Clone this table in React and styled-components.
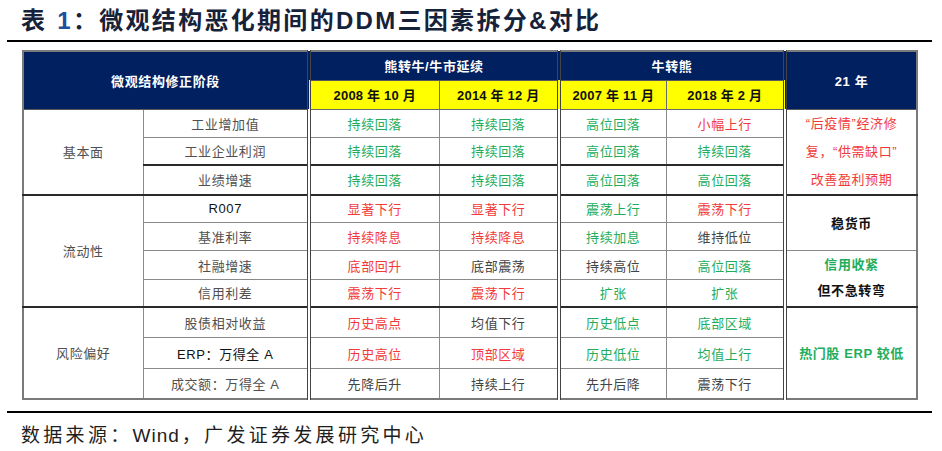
import React from "react";
import styled, { createGlobalStyle } from "styled-components";

const Global = createGlobalStyle`
  html, body { margin: 0; padding: 0; background: #fff; }
  body { font-family: "Liberation Sans", "Noto Sans CJK SC", sans-serif; }
`;

const Page = styled.div`
  width: 942px;
  height: 451px;
  padding: 0 10px 0 7px;
  box-sizing: border-box;
  display: flex;
  flex-direction: column;
`;

const Title = styled.h1`
  margin: 0;
  height: 40px;
  line-height: 42px;
  padding-left: 14px;
  font-family: "Liberation Sans", "Noto Sans CJK SC", sans-serif;
  font-size: 24px;
  font-weight: 700;
  letter-spacing: 2.3px;
  color: #16223a;
  white-space: nowrap;
`;

const Num = styled.span`
  color: #1d4f9c;
  margin-left: 10px;
`;

const Rule = styled.div`
  height: 2px;
  background: #000;
  width: 925px;
  margin-top: ${(p) => p.$mt || 0}px;
`;

const TableWrap = styled.div`
  padding: 8px 0 0 15px;
`;

const Table = styled.table`
  border-collapse: collapse;
  table-layout: fixed;
  width: 894px;
  border: 2px solid #7a7a7a;
  font-size: 13px;
  letter-spacing: 0.6px;
`;

const Col = styled.col`
  width: ${(p) => p.$w}px;
`;

const Row = styled.tr`
  height: ${(p) => p.$h}px;
`;

const HeadCell = styled.th`
  background: #002060;
  color: #fff;
  font-weight: 700;
  font-size: 13px;
  text-align: center;
  padding: 0;
  border: 1px solid #5a5a5a;
  border-left: ${(p) => (p.$group ? "4px double #444" : "1px solid #5a5a5a")};
`;

const DateCell = styled.th`
  background: #ffff00;
  color: #111;
  font-weight: 700;
  font-size: 13px;
  letter-spacing: 0.2px;
  text-align: center;
  padding: 0;
  border: 1px solid #6a6a6a;
  border-left: ${(p) => (p.$group ? "4px double #444" : "1px solid #6a6a6a")};
`;

const tones = {
  red: "#f23a3a",
  green: "#22ad5c",
  gray: "#444",
  label: "#505050",
  black: "#111",
};

const Cell = styled.td`
  text-align: center;
  padding: 0;
  color: ${(p) => tones[p.$tone || "gray"]};
  font-weight: ${(p) => (p.$bold ? 700 : 400)};
  border: 1px solid #8a8a8a;
  border-top: ${(p) => (p.$sep ? "2px solid #2a2a2a" : "1px solid #8a8a8a")};
  border-left: ${(p) => (p.$group ? "4px double #444" : "1px solid #8a8a8a")};
  line-height: ${(p) => (p.$lh ? p.$lh + "px" : "normal")};
`;

const Line = styled.div`
  color: ${(p) => tones[p.$tone]};
`;

const Footer = styled.div`
  padding: 7px 0 0 14px;
  font-family: "Liberation Sans", "Noto Sans CJK SC", sans-serif;
  font-size: 19px;
  letter-spacing: 3.3px;
  color: #1e1e1e;
  white-space: nowrap;
`;

const Latin = styled.span`
  letter-spacing: 1px;
  margin-right: 2px;
`;

const heads = ["2008 年 10 月", "2014 年 12 月", "2007 年 11 月", "2018 年 2 月"];
const widths = [120, 166, 130, 120, 107, 119, 132];

const sections = [
  {
    name: "基本面",
    rows: [
      { label: "工业增加值", h: 28, v: [["green", "持续回落"], ["green", "持续回落"], ["green", "高位回落"], ["red", "小幅上行"]] },
      { label: "工业企业利润", h: 28, v: [["green", "持续回落"], ["green", "持续回落"], ["green", "高位回落"], ["green", "持续回落"]] },
      { label: "业绩增速", h: 29, darkTop: true, v: [["green", "持续回落"], ["green", "持续回落"], ["green", "高位回落"], ["green", "高位回落"]] },
    ],
  },
  {
    name: "流动性",
    rows: [
      { label: "R007", labelTone: "black", h: 28, v: [["red", "显著下行"], ["red", "显著下行"], ["green", "震荡上行"], ["red", "震荡下行"]] },
      { label: "基准利率", h: 28, v: [["red", "持续降息"], ["red", "持续降息"], ["green", "持续加息"], ["gray", "维持低位"]] },
      { label: "社融增速", h: 29, v: [["red", "底部回升"], ["gray", "底部震荡"], ["gray", "持续高位"], ["green", "高位回落"]] },
      { label: "信用利差", h: 27, v: [["red", "震荡下行"], ["red", "震荡下行"], ["green", "扩张"], ["green", "扩张"]] },
    ],
  },
  {
    name: "风险偏好",
    rows: [
      { label: "股债相对收益", h: 31, v: [["red", "历史高点"], ["gray", "均值下行"], ["green", "历史低点"], ["green", "底部区域"]] },
      { label: "ERP：万得全 A", labelTone: "black", h: 31, v: [["red", "历史高位"], ["red", "顶部区域"], ["green", "历史低位"], ["green", "均值上行"]] },
      { label: "成交额：万得全 A", h: 30, v: [["gray", "先降后升"], ["gray", "持续上行"], ["gray", "先升后降"], ["gray", "震荡下行"]] },
    ],
  },
];

function rightCell(si, ri) {
  if (si === 0 && ri === 0) {
    return (
      <Cell rowSpan={3} $group $tone="red" $lh={28}>
        “后疫情”经济修<br />复，“供需缺口”<br />改善盈利预期
      </Cell>
    );
  }
  if (si === 1 && ri === 0) {
    return (
      <Cell rowSpan={2} $group $tone="black" $bold $sep>
        稳货币
      </Cell>
    );
  }
  if (si === 1 && ri === 2) {
    return (
      <Cell rowSpan={2} $group $bold $lh={26}>
        <Line $tone="green">信用收紧</Line>
        <Line $tone="black">但不急转弯</Line>
      </Cell>
    );
  }
  if (si === 2 && ri === 0) {
    return (
      <Cell rowSpan={3} $group $tone="green" $bold $sep>
        热门股 ERP 较低
      </Cell>
    );
  }
  return null;
}

export default function App() {
  return (
    <>
      <Global />
      <Page>
        <Title>
          表<Num>1</Num>：微观结构恶化期间的DDM三因素拆分&amp;对比
        </Title>
        <Rule />
        <TableWrap>
          <Table>
            <colgroup>
              {widths.map((w, i) => (
                <Col key={i} $w={w} />
              ))}
            </colgroup>
            <thead>
              <Row $h={29}>
                <HeadCell colSpan={2} rowSpan={2}>微观结构修正阶段</HeadCell>
                <HeadCell colSpan={2} $group>熊转牛/牛市延续</HeadCell>
                <HeadCell colSpan={2} $group>牛转熊</HeadCell>
                <HeadCell rowSpan={2} $group>21 年</HeadCell>
              </Row>
              <Row $h={29}>
                {heads.map((h, i) => (
                  <DateCell key={h} $group={i === 0 || i === 2}>
                    {h}
                  </DateCell>
                ))}
              </Row>
            </thead>
            <tbody>
              {sections.map((s, si) =>
                s.rows.map((r, ri) => (
                  <Row key={s.name + ri} $h={r.h}>
                    {ri === 0 && (
                      <Cell rowSpan={s.rows.length} $tone="label" $sep={si > 0}>
                        {s.name}
                      </Cell>
                    )}
                    <Cell $tone={r.labelTone || "label"} $sep={(ri === 0 && si > 0) || r.darkTop}>
                      {r.label}
                    </Cell>
                    {r.v.map(([tone, text], ci) => (
                      <Cell
                        key={ci}
                        $tone={tone}
                        $group={ci === 0 || ci === 2}
                        $sep={(ri === 0 && si > 0) || r.darkTop}
                      >
                        {text}
                      </Cell>
                    ))}
                    {rightCell(si, ri)}
                  </Row>
                ))
              )}
            </tbody>
          </Table>
        </TableWrap>
        <Rule $mt={11} />
        <Footer>
          数据来源：<Latin>Wind</Latin>，广发证券发展研究中心
        </Footer>
      </Page>
    </>
  );
}
